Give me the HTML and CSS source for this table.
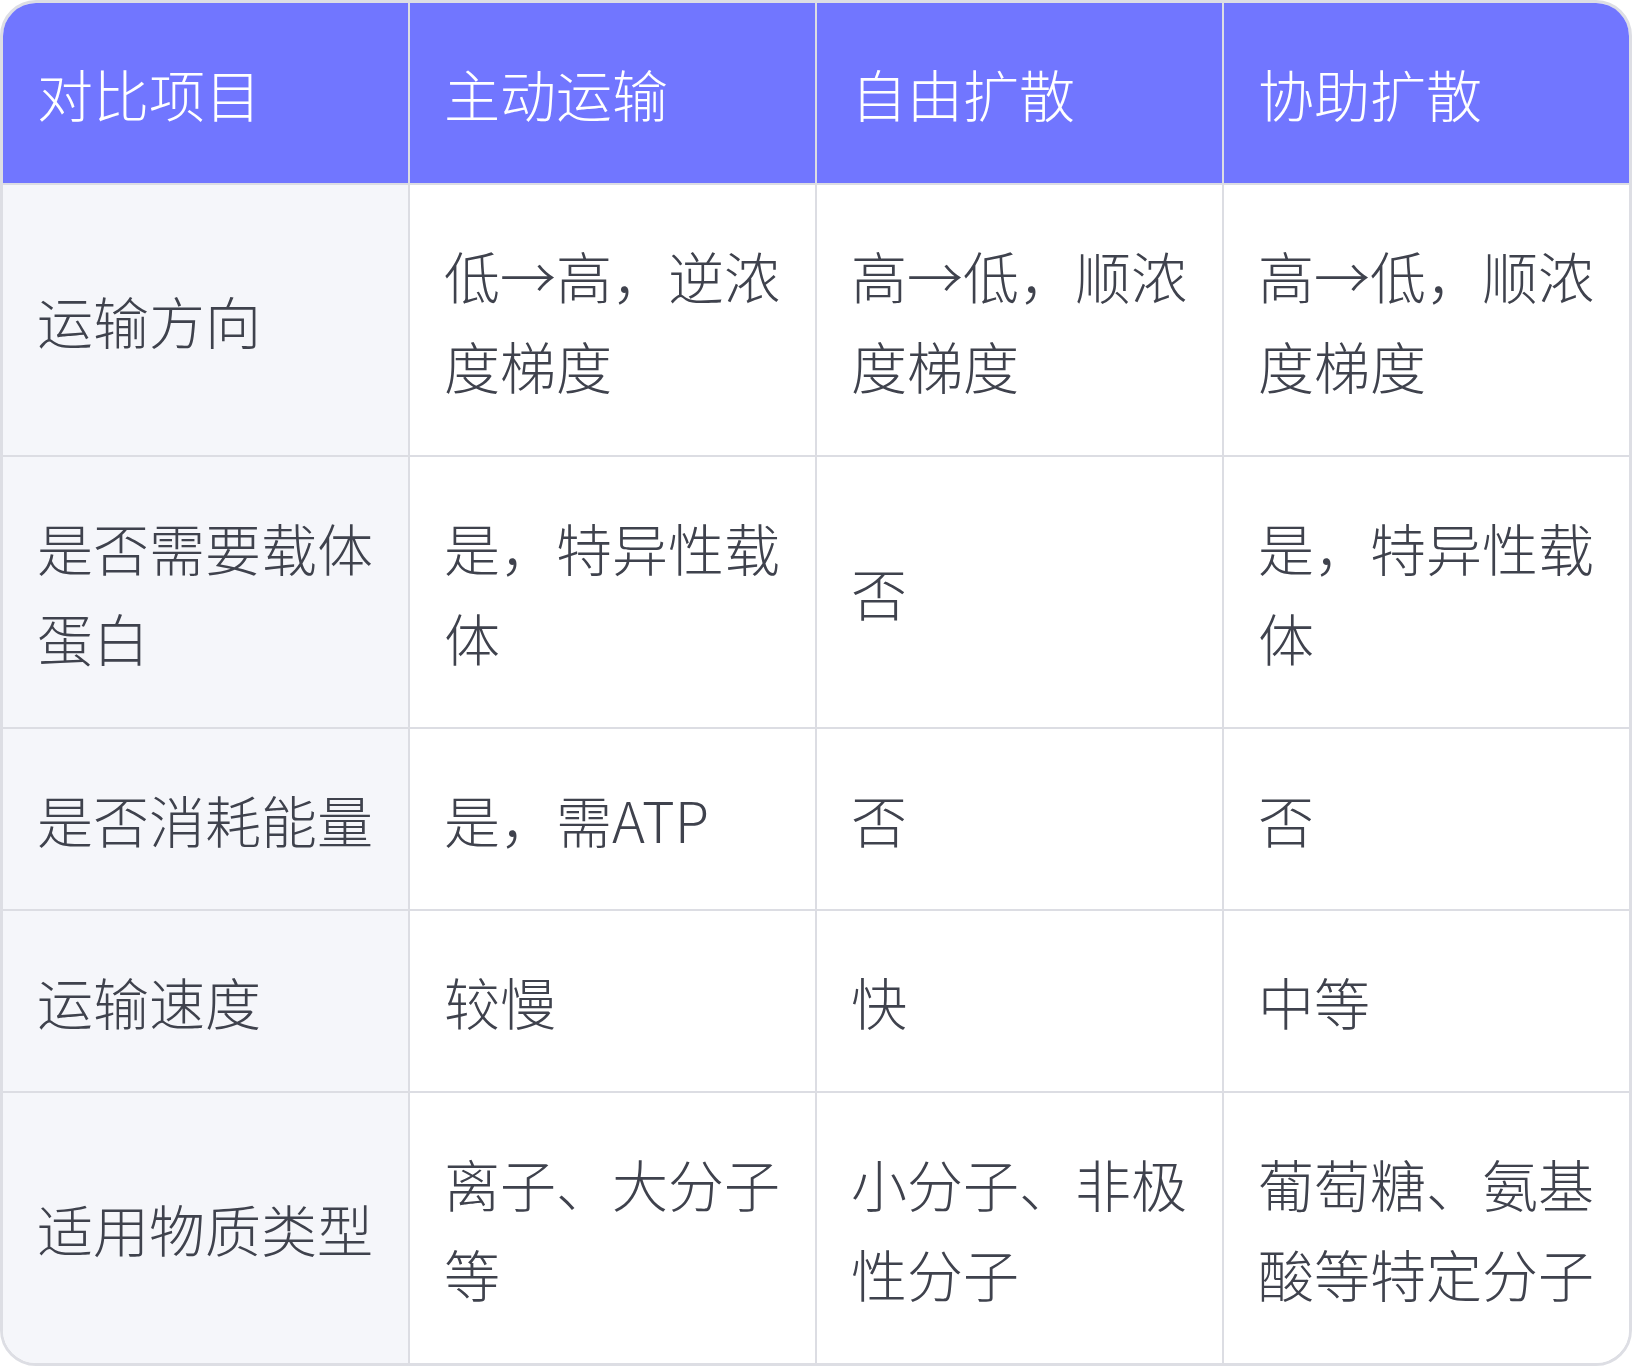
FILE: index.html
```html
<!DOCTYPE html>
<html lang="zh-CN">
<head>
<meta charset="utf-8">
<title>物质运输方式对比</title>
<link rel="stylesheet" href="styles.css">
</head>
<body>
<div class="wrap">
  <table class="cmp">
    <colgroup>
      <col class="c"><col class="c"><col class="c"><col class="c-last">
    </colgroup>
    <thead>
      <tr><th>对比项目</th><th>主动运输</th><th>自由扩散</th><th>协助扩散</th></tr>
    </thead>
    <tbody>
      <tr><td>运输方向</td><td>低→高，逆浓度梯度</td><td>高→低，顺浓度梯度</td><td>高→低，顺浓度梯度</td></tr>
      <tr><td>是否需要载体蛋白</td><td>是，特异性载体</td><td>否</td><td>是，特异性载体</td></tr>
      <tr><td>是否消耗能量</td><td>是，需ATP</td><td>否</td><td>否</td></tr>
      <tr><td>运输速度</td><td>较慢</td><td>快</td><td>中等</td></tr>
      <tr><td>适用物质类型</td><td>离子、大分子等</td><td>小分子、非极性分子</td><td>葡萄糖、氨基酸等特定分子</td></tr>
    </tbody>
  </table>
</div>
</body>
</html>
```

FILE: styles.css
```css
html, body {
  margin: 0;
  padding: 0;
  background: #ffffff;
}
body {
  font-family: "Noto Sans CJK SC", "Noto Sans", sans-serif;
  font-weight: 300;
}
.wrap {
  width: 1632px;
  height: 1366px;
  box-sizing: border-box;
  border: 3px solid #dddee4;
  border-radius: 36px;
  overflow: hidden;
  background: #ffffff;
}
.cmp {
  width: 1626px;
  border-collapse: separate;
  border-spacing: 0;
  table-layout: fixed;
}
.cmp col.c {
  width: 407px;
}
.cmp col.c-last {
  width: 405px;
}
.cmp th,
.cmp td {
  padding: 45px 30px 45px 34px;
  font-size: 56px;
  line-height: 90px;
  text-align: left;
  vertical-align: middle;
  border-right: 2px solid #dcdde3;
  border-bottom: 2px solid #dcdde3;
  font-weight: 300;
}
.cmp th:last-child,
.cmp td:last-child {
  border-right: none;
}
.cmp tbody tr:last-child td {
  border-bottom: none;
}
.cmp th {
  background: #7176ff;
  color: #ffffff;
}
.cmp td {
  color: #3f424d;
  background: #ffffff;
}
.cmp td:first-child {
  background: #f5f6fa;
}
```
